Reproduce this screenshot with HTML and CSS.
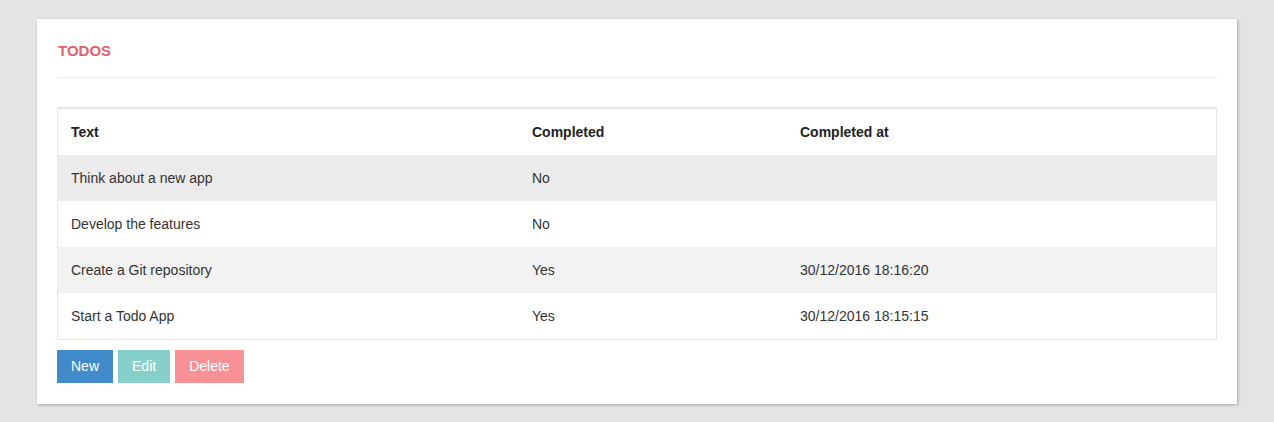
FILE: index.html
```html
<!DOCTYPE html>
<html>
<head>
<meta charset="utf-8">
<link rel="stylesheet" href="styles.css">
</head>
<body>
<div class="page">
  <div class="card">
    <h2 class="title">TODOS</h2>
    <hr class="rule">
    <table class="todos">
      <thead>
        <tr><th class="c1">Text</th><th class="c2">Completed</th><th class="c3">Completed at</th></tr>
      </thead>
      <tbody>
        <tr class="hover"><td>Think about a new app</td><td>No</td><td></td></tr>
        <tr><td>Develop the features</td><td>No</td><td></td></tr>
        <tr class="stripe"><td>Create a Git repository</td><td>Yes</td><td>30/12/2016 18:16:20</td></tr>
        <tr><td>Start a Todo App</td><td>Yes</td><td>30/12/2016 18:15:15</td></tr>
      </tbody>
    </table>
    <div class="actions">
      <button class="btn btn-new">New</button>
      <button class="btn btn-edit">Edit</button>
      <button class="btn btn-delete">Delete</button>
    </div>
  </div>
</div>
</body>
</html>
```
FILE: styles.css
```css
html, body {
  margin: 0;
  padding: 0;
  background: #e4e4e4;
  font-family: "Liberation Sans", Arial, sans-serif;
  font-size: 14px;
  color: #333;
}
.page {
  padding: 19px 37px;
}
.card {
  width: 1200px;
  box-sizing: border-box;
  background: #fff;
  padding: 20px 20px 21px 20px;
  box-shadow: 1px 1px 3px rgba(0,0,0,0.28);
}
.title {
  margin: 2px 0 16px 1px;
  font-size: 15px;
  line-height: 20px;
  font-weight: bold;
  color: #e2626a;
}
.rule {
  border: 0;
  border-top: 1px solid #eaeaea;
  margin: 0 0 29px 0;
  height: 0;
}
.todos {
  width: 1160px;
  border-collapse: separate;
  border-spacing: 0;
  border: 1px solid #e6e9ec;
  border-top: 2px solid #e6e9ec;
  table-layout: fixed;
}
.todos th, .todos td {
  height: 20px;
  padding: 13px 13px;
  line-height: 20px;
  text-align: left;
  vertical-align: middle;
}
.todos th {
  font-size: 14px;
  font-weight: bold;
  color: #222;
}
.c1 { width: 435px; }
.c2 { width: 242px; }
.todos tr.hover td { background: #ebebeb; }
.todos tr.stripe td { background: #f2f2f2; }
.actions {
  display: flex;
  gap: 5px;
  margin-top: 10px;
}
.btn {
  border: 0;
  margin: 0;
  padding: 6px 14px;
  line-height: 21px;
  font-family: "Liberation Sans", Arial, sans-serif;
  font-size: 14px;
  color: #fff;
  border-radius: 0;
}
.btn-new { background: #428bca; }
.btn-edit { background: #87d0c9; }
.btn-delete { background: #f79196; }
```
